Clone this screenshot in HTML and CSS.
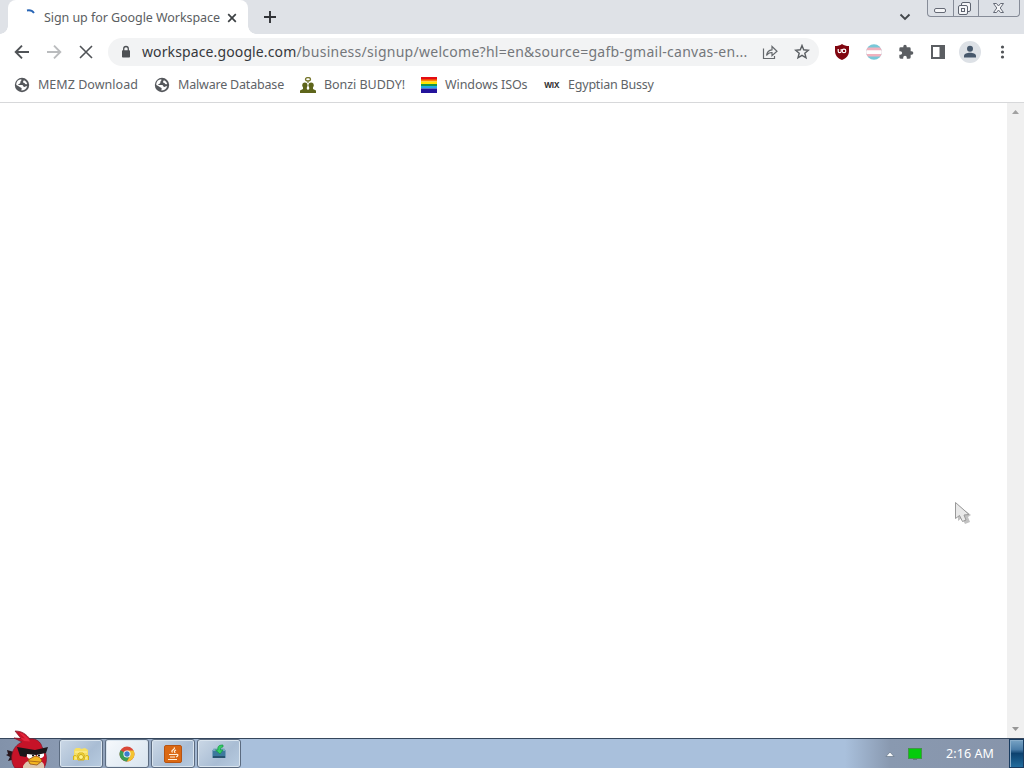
FILE: index.html
```html
<!DOCTYPE html>
<html lang="en">
<head>
<meta charset="utf-8">
<title>Sign up for Google Workspace</title>
<link rel="stylesheet" href="styles.css">
</head>
<body>
<div class="screen">
  <header class="tabstrip">
    <div class="tab">
      <svg class="spinner" width="16" height="16" viewBox="0 0 16 16"><path d="M5 2.500Q9.500 1.500 12 5" fill="none" stroke="#2865b5" stroke-width="1.800"/></svg>
      <span class="tab-title">Sign up for Google Workspace</span>
      <svg width="16" height="16" viewBox="0 0 16 16"><path d="M4.200 4.200l7.600 7.600M11.800 4.200l-7.600 7.600" stroke="#3c4043" stroke-width="1.700"/></svg>
    </div>
    <svg class="new-tab" width="16" height="16" viewBox="0 0 16 16"><path d="M8 2v12M2 8h12" stroke="#303236" stroke-width="1.900"/></svg>
    <svg class="tab-search" width="16" height="16" viewBox="0 0 16 16"><path d="M3.500 5.500L8 10l4.500-4.500" fill="none" stroke="#43474b" stroke-width="1.900"/></svg>
    <div class="window-controls">
      <span class="control minimize"><svg width="25" height="16" viewBox="0 0 25 16"><rect x="6.500" y="8.500" width="11" height="4" rx="1.500" fill="#f5f6f8" stroke="#656a76"/></svg></span>
      <span class="control restore"><svg width="24" height="16" viewBox="0 0 24 16"><g fill="#f5f6f8" stroke="#5e6470"><rect x="7.500" y="2.500" width="9" height="9" rx="1.500"/><rect x="4.500" y="5.500" width="9" height="9" rx="1.500"/><rect x="7.500" y="8.500" width="3" height="3"/></g></svg></span>
      <span class="control close"><svg width="41" height="16" viewBox="0 0 41 16"><path d="M14.500 3.500h3l2 2.500 2-2.500h3l-3.300 4.500 3.300 4.500h-3l-2-2.500-2 2.500h-3l3.300-4.500z" fill="#f5f6f8" stroke="#656a76"/></svg></span>
    </div>
  </header>

  <nav class="toolbar">
    <svg width="16" height="16" viewBox="0 0 16 16"><path d="M15 8H2M8 1.700L1.700 8 8 14.300" fill="none" stroke="#505357" stroke-width="1.900"/></svg>
    <svg width="16" height="16" viewBox="0 0 16 16"><path d="M1 8h13M8 1.700L14.300 8 8 14.300" fill="none" stroke="#babcbe" stroke-width="1.900"/></svg>
    <svg width="16" height="16" viewBox="0 0 16 16"><path d="M2 2l12 12M14 2L2 14" stroke="#505357" stroke-width="1.600"/></svg>
    <div class="omnibox">
      <svg class="lock" width="16" height="16" viewBox="0 0 16 16"><rect x="4" y="6.300" width="8" height="7.200" rx=".8" fill="#4d5054"/><path d="M5.700 7V4.800a2.300 2.300 0 0 1 4.600 0V7" fill="none" stroke="#4d5054" stroke-width="1.300"/></svg>
      <span class="url"><span class="host">workspace.google.com</span>/business/signup/welcome?hl=en&amp;source=gafb-gmail-canvas-en...</span>
      <svg class="share" width="16" height="16" viewBox="0 0 16 16"><path d="M1.500 4.500v10h11V12M4.500 11.500C5 7.500 7 6 10 5.800V2.500l5 4.700-5 4.500V8.500C7.500 8.300 6 9.300 4.500 11.500z" fill="none" stroke="#65696d" stroke-width="1.200"/></svg>
      <svg width="16" height="16" viewBox="0 0 16 16"><path d="M8 1.500l1.700 4.300 4.700.4-3.600 3 1.200 4.600L8 11.400l-4 2.400 1.200-4.600-3.600-3 4.700-.4z" fill="none" stroke="#5a5e62" stroke-width="1.400"/></svg>
    </div>
    <div class="extensions">
      <svg width="16" height="16" viewBox="0 0 16 16"><path d="M8 0c2.200 1.400 4 2 7 2v5c0 4.500-2.500 7-7 9-4.500-2-7-4.500-7-9V2c3 0 4.800-.6 7-2z" fill="#800610"/><path d="M4.200 5v2.200q0 1.500 1.500 1.500t1.500-1.500V5" fill="none" stroke="#fff" stroke-width="1.200"/><circle cx="10" cy="6.900" r="1.800" fill="none" stroke="#fff" stroke-width="1.200"/></svg>
      <svg width="16" height="16" viewBox="0 0 16 16"><clipPath id="disc"><circle cx="8" cy="8" r="7.800"/></clipPath><g clip-path="url(#disc)"><path fill="#78c8d8" d="M0 0h16v16H0z"/><path fill="#f1b1be" d="M0 3.500h16v9H0z"/><path fill="#fff" d="M0 6.300h16v3.600H0z"/></g></svg>
      <svg width="16" height="16" viewBox="0 0 24 24"><path d="M20.500 11H19V7a2 2 0 0 0-2-2h-4V3.500a2.500 2.500 0 0 0-5 0V5H4a2 2 0 0 0-2 2v3.800h1.500a2.700 2.700 0 0 1 0 5.400H2V20a2 2 0 0 0 2 2h3.800v-1.500a2.700 2.700 0 0 1 5.400 0V22H17a2 2 0 0 0 2-2v-4h1.500a2.500 2.500 0 0 0 0-5z" fill="#5b5e62"/></svg>
      <svg width="16" height="16" viewBox="0 0 16 16"><rect x="2" y="2" width="12" height="12" fill="#fff" stroke="#5b5e62" stroke-width="2"/><path fill="#5b5e62" d="M9.500 2H14v12H9.500z"/></svg>
      <span class="avatar"><svg width="22" height="22" viewBox="0 0 22 22"><circle cx="11" cy="11" r="11" fill="#dde1e6"/><circle cx="11" cy="7.800" r="3" fill="#47586c"/><path d="M5 16.500v-1.700c0-2 3-3.100 6-3.100s6 1.100 6 3.100v1.700z" fill="#47586c"/></svg></span>
      <svg width="16" height="16" viewBox="0 0 16 16"><g fill="#505357"><circle cx="8.500" cy="3" r="1.600"/><circle cx="8.500" cy="8" r="1.600"/><circle cx="8.500" cy="13" r="1.600"/></g></svg>
    </div>
  </nav>

  <div class="bookmarks">
    <div class="bookmark"><svg width="16" height="16" viewBox="0 0 16 16"><circle cx="8" cy="8" r="7.200" fill="#55585c"/><path d="M7.200 2.200C8 4 6 4 6.400 5.500 6.500 7 4.500 6.500 4 8h4c1.500 0 1 2 2.400 2 .8 0 1.300-.8 2.800-.7-1 3-3 4.300-5.900 4.300 0-1.300 1-2-.2-2.800C5.800 10 4.500 9.300 2.300 8 2.100 4.500 4.500 2.300 7.200 2.200zM9.800 3.200c1.800.6 3 2 3.400 3.800-1.200.4-2.300.3-2.500-.7-.2-.8-1.800-.3-1.800-1.300z" fill="#fff"/></svg><span class="memz">MEMZ Download</span></div>
    <div class="bookmark"><svg width="16" height="16" viewBox="0 0 16 16"><circle cx="8" cy="8" r="7.200" fill="#55585c"/><path d="M7.200 2.200C8 4 6 4 6.400 5.500 6.500 7 4.500 6.500 4 8h4c1.500 0 1 2 2.400 2 .8 0 1.300-.8 2.800-.7-1 3-3 4.300-5.900 4.300 0-1.300 1-2-.2-2.800C5.800 10 4.500 9.300 2.300 8 2.100 4.500 4.500 2.300 7.200 2.200zM9.800 3.200c1.800.6 3 2 3.400 3.800-1.200.4-2.300.3-2.500-.7-.2-.8-1.800-.3-1.800-1.300z" fill="#fff"/></svg><span class="malware">Malware Database</span></div>
    <div class="bookmark"><svg width="16" height="16" viewBox="0 0 16 16"><ellipse cx="8" cy="2.200" rx="2.500" ry="1.700" fill="none" stroke="#77772d" stroke-width="1.300"/><g fill="#5e651b"><circle cx="4.900" cy="8.200" r="2.600"/><circle cx="11.100" cy="8.200" r="2.600"/><path d="M0 16v-2.500L3 12V9h3.800v3L8 13l1.200-1V9H13v3l3 1.500V16z"/><path d="M7.500 4h1v2h-1z"/></g></svg><span class="bonzi">Bonzi BUDDY!</span></div>
    <div class="bookmark"><svg width="16" height="16" viewBox="0 0 16 16"><path fill="#e40b12" d="M0 0h16v3H0z"/><path fill="#ff8200" d="M0 2.500h16v2H0z"/><path fill="#ffe500" d="M0 4.500h16v2.500H0z"/><path fill="#159548" d="M0 7h16v2H0z"/><path fill="#20a8e8" d="M0 9h16v2.500H0z"/><path fill="#24139b" d="M0 11.500h16V16H0z"/></svg><span class="windows">Windows ISOs</span></div>
    <div class="bookmark"><b class="wix">WIX</b><span class="egyptian">Egyptian Bussy</span></div>
  </div>

  <main class="viewport">
    <div class="scrollbar">
      <svg width="17" height="17" viewBox="0 0 17 17"><path d="M5 11l3.500-4 3.500 4z" fill="#a1a1a1"/></svg>
      <svg width="17" height="17" viewBox="0 0 17 17"><path d="M5 6h7l-3.500 4z" fill="#969696"/></svg>
    </div>
  </main>

  <footer class="taskbar">
    <div class="start"></div>
    <div class="tasks">
      <div class="task"><svg width="18" height="18" viewBox="0 0 18 18"><path d="M2 5l2-2h4l1 1 4-1 3 2v10H2z" fill="#f6df61"/><path d="M3 7h12M3 10h12M3 13h12" stroke="#fff2a4"/><path d="M1.500 15v-4l3-1M16.500 15v-4l-3-1M6 15l-1-4 2-3h4l2 3-1 4z" fill="#ffe64a" stroke="#d5b21b"/><circle cx="9" cy="12" r="2.500" fill="#fff58a" stroke="#c8a416"/></svg></div>
      <div class="task active"><svg width="16" height="16" viewBox="0 0 16 16"><circle cx="8" cy="8" r="7.500" fill="#d94738"/><path d="M8 8L1.500 4.300A7.500 7.500 0 0 0 8 15.500L11.500 9z" fill="#3b9e55"/><path d="M8 4.500h6.600A7.500 7.500 0 0 1 8 15.500L11.500 9z" fill="#f3c431"/><circle cx="8" cy="8" r="3.600" fill="#fff"/><circle cx="8" cy="8" r="2.700" fill="#3c7dcc"/></svg></div>
      <div class="task"><svg width="18" height="18" viewBox="0 0 18 18"><rect x=".5" y=".5" width="17" height="17" rx="1.500" fill="#da6813" stroke="#b75412"/><path d="M10 2.500c2 2-4 2.500-1.500 5M12 5c-2 1-2 1.500-.8 3M5 9.500h7M6 12h5M4 14.500h9M12 9.500c3-.5 2 2 0 2.500" fill="none" stroke="#fff1dc" stroke-width="1.200"/></svg></div>
      <div class="task"><svg class="drive" width="16" height="16" viewBox="0 0 16 16"><path d="M1.500 6h13v8h-13z" fill="#3c799d"/><path d="M1.500 7l1-2.500h11l1 2.500z" fill="#76a5be"/><path d="M2 13h12" stroke="#28536f" stroke-width="2"/><path d="M12 1C7 1 6.500 3 7 6H4.500L9 10l3-4H9.500c0-2 .5-3 2.500-3z" fill="#35cf64" stroke="#159347" stroke-width=".7"/></svg></div>
    </div>
    <div class="tray">
      <svg class="tray-arrow" width="10" height="8" viewBox="0 0 10 8"><path d="M1 6.500L5 2l4 4.500z" fill="#f8fafc" stroke="#59697c" stroke-width=".6"/></svg>
      <svg class="monitor" width="14" height="14" viewBox="0 0 14 14"><path d="M5 11h4v2H5z" fill="#647b7b"/><rect x=".5" y="1.500" width="13" height="10" fill="#05cb0c" stroke="#429348"/></svg>
      <span class="clock">2:16 AM</span>
      <div class="show-desktop"></div>
    </div>
  </footer>

  <svg class="start-bird" width="46" height="38" viewBox="0 0 46 38">
    <path d="M9 22l-7-2 1 4-2 1 4 2-2 4 7-2z" fill="#28151b"/>
    <path d="M17 12L9 8l7 .5L10 1c7 0 11 3 15 8 6-1 11 3 12 8 5 5 6 14 2 21H10C4 30 6 17 17 12z" fill="#c61328" stroke="#7d1728" stroke-width=".7"/>
    <path d="M19 11l-4-3.500 5 1-6-6c5 1 9 5 11 9z" fill="#e3263d"/>
    <path d="M18 36q3-6 10-5l9 1q3 2 2 6H18z" fill="#dcc6ae"/>
    <path d="M22 22l9 2v4q-6 3-9-1zM32 24l7-2v4q-3 4-7 1z" fill="#fff"/>
    <path d="M12 17l18 3 13-3-2 6-10 2-9-1-1 3-6-1z" fill="#1b1619"/>
    <circle cx="28" cy="25.500" r="1"/><circle cx="34" cy="25.500" r="1"/>
    <path d="M23 30l7-4q5 0 7 5l-5 4-7-1z" fill="#f4b521" stroke="#8e4b13" stroke-width=".8"/><path d="M24 31l11 1" stroke="#9c5917" stroke-width=".8"/>
  </svg>
  <svg class="pointer" width="20" height="27" viewBox="0 0 20 27"><path d="M5 6v16l4-3 3 6 5-2-2-5 3-2z" fill="#999" opacity=".6"/><path d="M2.500 3.500v16l4-3 3 6 3.500-1.500-2-5 5-.5z" fill="#e9e9e9" stroke="#999"/></svg>
</div>
</body>
</html>
```

FILE: styles.css
```css
* { box-sizing: border-box; }
body { margin: 0; background: #fff; overflow: hidden; font-family: "Noto Sans", "Open Sans", sans-serif; }
svg { display: block; flex: none; }
.screen { position: relative; width: 1024px; height: 768px; display: flex; flex-direction: column; overflow: hidden; }
.tabstrip { height: 34px; flex: none; display: flex; align-items: flex-start; padding-left: 8px; background: #dfe2e7; }
.tab { position: relative; width: 240px; height: 34px; padding: 1px 8px 0 14px; border-radius: 8px 8px 0 0; display: flex; align-items: center; background: #fff; }
.tab::before, .tab::after { content: ""; position: absolute; bottom: 0; width: 8px; height: 8px; }
.tab::before { left: -8px; background: radial-gradient(circle at 0 0, transparent 7.5px, #fff 8px); }
.tab::after { right: -8px; background: radial-gradient(circle at 100% 0, transparent 7.5px, #fff 8px); }
.spinner { margin: -3px 6px 0 0; }
.tab-title { width: 180px; white-space: nowrap; font-size: 12.5px; letter-spacing: -.06px; color: #5b5e62; }
.new-tab { margin: 9px 0 0 14px; }
.tab-search { margin: 9px 14px 0 auto; }
.window-controls { display: flex; width: 93px; height: 17px; margin-right: 4px; border: 1px solid #868c98; border-top: 0; border-radius: 0 0 4px 4px; background: #dce0e6; }
.control { height: 16px; }
.control + .control { border-left: 1px solid #868c98; }
.minimize { width: 25px; }
.restore { width: 25px; }
.close { width: 41px; }
.toolbar { height: 36px; flex: none; display: flex; align-items: center; gap: 16px; padding-left: 14px; }
.omnibox { width: 711px; height: 28px; border-radius: 14px; display: flex; align-items: center; gap: 16px; padding: 0 9px 0 10px; margin-left: -2px; background: #f2f3f4; }
.lock { margin-right: -8px; }
.url { width: 613px; margin-right: -1px; padding-bottom: 2px; white-space: nowrap; font-size: 14px; letter-spacing: .27px; color: #74777b; }
.host { letter-spacing: .12px; color: #36383c; }
.share { margin-left: -8px; }
.extensions { display: flex; align-items: center; gap: 16px; margin-left: -1px; }
.avatar { margin: 0 -3px; }
.bookmarks { height: 33px; flex: none; display: flex; align-items: center; gap: 16px; padding: 0 14px 3px; border-bottom: 1px solid #d7d8da; }
.bookmark { display: flex; align-items: center; gap: 8px; white-space: nowrap; font-size: 12.5px; color: #606367; }
.memz { width: 100px; letter-spacing: .03px; }
.malware { width: 106px; letter-spacing: -.19px; }
.bonzi { width: 81px; letter-spacing: -.05px; }
.windows { width: 83px; letter-spacing: -.08px; }
.egyptian { width: 86px; letter-spacing: -.21px; }
.wix { width: 16px; font: 700 8px Inter, sans-serif; letter-spacing: -.45px; color: #333; }
.viewport { flex: 1; display: flex; justify-content: flex-end; background: #fff; }
.scrollbar { width: 17px; display: flex; flex-direction: column; justify-content: space-between; background: #f0f0f0; }
.taskbar { height: 30px; flex: none; display: flex; border-top: 1px solid #35465c; background: linear-gradient(90deg, #8292aa 0, #8999b1 56px, #a9c0dc 240px, #a9c0dc 845px, #8999b0 890px, #8794aa); }
.start { width: 59px; flex: none; }
.tasks { display: flex; gap: 2px; }
.task { width: 44px; height: 29px; display: flex; align-items: center; justify-content: center; border: 1px solid #5b6b80; border-radius: 3px; background: linear-gradient(135deg, #cbd8e6, #a9bdd4 60%, #b8cbe0); box-shadow: inset 0 0 0 1px #dae5ef; }
.task.active { background: linear-gradient(135deg, #f6f9fc, #d8e4ef); }
.drive { margin-top: -4px; }
.tray { margin-left: auto; display: flex; align-items: center; }
.tray-arrow { margin-right: 13px; }
.monitor { margin-right: 24px; }
.clock { width: 63px; font-size: 12.5px; letter-spacing: .08px; white-space: nowrap; color: #fff; }
.show-desktop { width: 15px; height: 29px; border: 1px solid #183b60; background: linear-gradient(#79a4c5 0, #4b7da8 35%, #0d426f 50%, #226c9d); box-shadow: inset 1px 1px 0 #8aaecb; }
.start-bird { position: absolute; left: 5px; top: 730px; }
.pointer { position: absolute; left: 953px; top: 499px; }
```
